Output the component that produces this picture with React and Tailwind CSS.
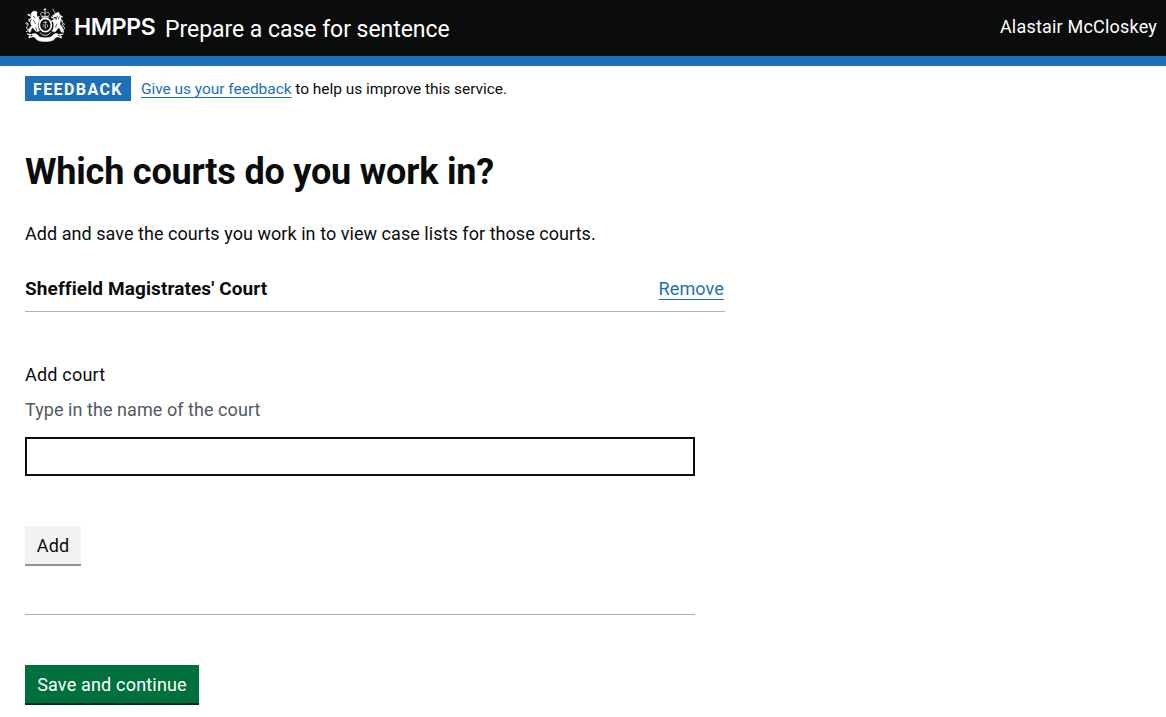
import React from 'react';

function Crest() {
  return (
    <svg
      className="mt-[8px] block h-[35px] w-[40px] shrink-0"
      viewBox="30 24 120 105"
      fill="none"
      stroke="#fff"
      strokeLinecap="round"
      strokeLinejoin="round"
      aria-hidden="true"
    >
      {/* crown */}
      <path d="M90 25v9M87 29h6" strokeWidth="2.5" />
      <path d="M80 48c-5-5-4-11 2-11 4 0 6 2 8 5 2-3 4-5 8-5 6 0 7 6 2 11z" strokeWidth="2.2" />
      <path d="M90 35v12" strokeWidth="1.6" />
      <path d="M80 51h21" strokeWidth="3.5" />
      {/* garter and shield */}
      <ellipse cx="91" cy="75" rx="18" ry="20" strokeWidth="5" />
      <path d="M85 67h11M91 64v22M84 74c4-2 4 6 1 8M96 73c4 1 3 8 0 9" strokeWidth="2" />
      {/* lion */}
      <path d="M52 36c5-5 12-3 15 2l-2 6 3 8c4 3 6 6 6 10-3 4-5 7-5 13 0 9 2 13 5 18l-9 2c-6-4-9-10-13-12-4 4-3 9-6 14l-5-1c0-8 3-15 9-19-5-6-4-14 1-20-3-3-4-7-1-10-3-3-3-7 2-11z" fill="#fff" strokeWidth="1" />
      <path d="M51 50l-9-5M50 56l-8 3 1 5M62 56l10-6M43 43l-4 2" strokeWidth="3.6" />
      <path d="M44 88c-7 2-11-3-8-8 3-4 5-7 1-11-4-3-6 2-3 4M40 91l-6 4" strokeWidth="3" />
      <path d="M55 49l6 4M56 62l5 9M62 83l3 8" stroke="#0b0c0c" strokeWidth="2" />
      {/* unicorn */}
      <path d="M113 27l9 14" strokeWidth="2" />
      <path d="M122 40l9-4 2 6c5 4 7 11 4 18-1 7-2 10-1 15 6 4 9 11 8 20l-6 1c-1-6-3-10-7-13-4 4-7 10-12 13l-9-3c5-5 6-10 6-18 0-6-2-10-5-14 5-3 10-3 14-6l-2-5-8 2-3-4z" fill="#fff" strokeWidth="1" />
      <path d="M119 57l-10-6M120 63l-11 1M131 58l10 3 1 7M138 48l4 3" strokeWidth="3.2" />
      <path d="M141 88c6 2 10-2 6-7-4-4-7-6-3-10 4-2 5 2 3 4M146 92l-2 6" strokeWidth="2.8" />
      <path d="M127 48l-3 10M133 51l-3 6M125 72l-3 10" stroke="#0b0c0c" strokeWidth="2" />
      {/* motto ribbon */}
      <path d="M37 102l10 2c-3 3-5 6-5 9 6-3 12-4 17-4M144 102l-10 2c3 3 5 6 5 9-6-3-12-4-17-4" strokeWidth="3.6" />
      <path d="M50 103c6-3 12-3 17 1 4 4 6 7 11 8 8 2 18 2 26 0 5-1 7-4 11-8 5-4 11-4 17-1l-8 9c-4 1-5 6-10 9-14 5-32 5-46 0-5-3-6-8-10-9z" fill="#fff" strokeWidth="1.5" />
      <path d="M76 98c5 7 10 8 15 8s10-1 15-8" strokeWidth="2.5" />
    </svg>
  );
}

function Header() {
  return (
    <header className="flex h-[66px] items-start border-b-[10px] border-[#1d70b8] bg-[#0b0c0c] pl-[25px] pr-[9px] text-white">
      <Crest />
      <span className="ml-[9px] mt-[11px] w-[91px] font-['Inter',sans-serif] text-[23px] leading-8 font-semibold tracking-[-0.35px]">
        HMPPS
      </span>
      <span className="mt-[14px] text-[23px] leading-8 tracking-[-0.04px] whitespace-nowrap">Prepare a case for sentence</span>
      <span className="ml-auto mt-[15px] text-[18px] leading-6 tracking-[0.2px]">Alastair McCloskey</span>
    </header>
  );
}

function FeedbackBanner() {
  return (
    <div className="mt-[10px] flex h-[25px] items-center">
      <strong className="h-[25px] w-[106px] bg-[#1d70b8] pl-[8px] pt-px text-[16px] leading-[25px] font-bold tracking-[1.4px] text-white">
        FEEDBACK
      </strong>
      <p className="ml-[10px] pt-[2px] text-[15.5px] leading-[25px] tracking-[-0.04px]">
        <a href="#" className="text-[#1d70b8] underline decoration-1 underline-offset-[3px] [text-decoration-skip-ink:none]">
          Give us your feedback
        </a>{' '}
        to help us improve this service.
      </p>
    </div>
  );
}

export default function App() {
  return (
    <div className="h-[717px] overflow-hidden bg-white font-['Roboto',sans-serif] text-[18px] leading-6 text-[#0b0c0c]">
      <Header />
      <main className="px-[25px]">
        <FeedbackBanner />
        <h1 className="mt-[51px] text-[36px] leading-10 font-bold tracking-[-0.2px]">Which courts do you work in?</h1>
        <p className="mt-[30px] tracking-[0.05px]">
          Add and save the courts you work in to view case lists for those courts.
        </p>
        <div className="mt-[31px] flex h-[35px] w-[700px] justify-between border-b border-[#b1b4b6] pr-px">
          <span className="text-[19px] font-bold tracking-[0.1px]">Sheffield Magistrates' Court</span>
          <a href="#" className="tracking-[0.13px] text-[#1d70b8] underline decoration-1 underline-offset-[4px]">
            Remove
          </a>
        </div>
        <form className="flex w-[670px] flex-col items-start">
          <label htmlFor="court" className="mt-[51px] tracking-[0.2px]">Add court</label>
          <span className="mt-[11px] tracking-[0.06px] text-[#505a5f]">Type in the name of the court</span>
          <input id="court" className="mt-[15px] h-[39px] w-full border-2 border-[#0b0c0c] px-1 outline-none" />
          <button type="button" className="mt-[50px] h-[40px] w-[56px] border-b-2 border-[#929191] bg-[#f3f2f1] pt-[2px] tracking-[0.1px]">
            Add
          </button>
          <hr className="mt-[48px] w-full border-t border-[#b1b4b6]" />
          <button type="button" className="mt-[50px] h-[40px] w-[174px] border-b-2 border-[#002d18] bg-[#00703c] pt-[2px] tracking-[0.18px] text-white">
            Save and continue
          </button>
        </form>
      </main>
    </div>
  );
}
